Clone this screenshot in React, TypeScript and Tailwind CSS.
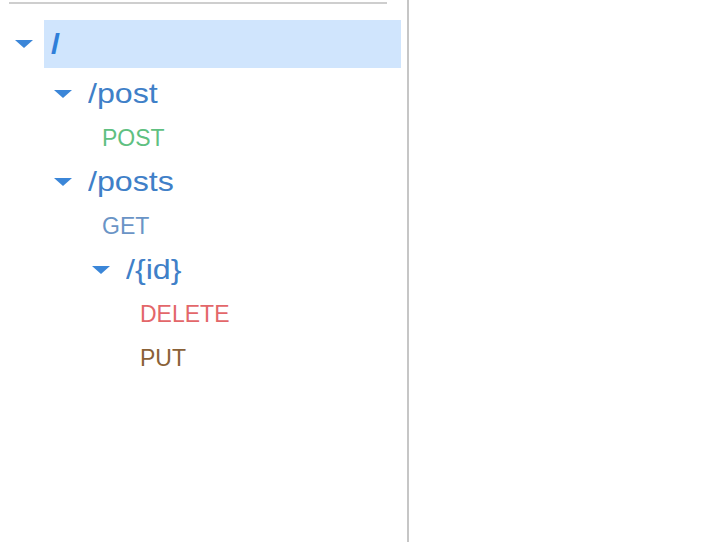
import React from 'react';

type Method = { name: string; color: string };
type PathNode = { label: string; methods: Method[]; children: PathNode[] };

const tree: PathNode = {
  label: '/',
  methods: [],
  children: [
    {
      label: '/post',
      methods: [{ name: 'POST', color: 'text-[#5fc081]' }],
      children: [],
    },
    {
      label: '/posts',
      methods: [{ name: 'GET', color: 'text-[#6a94c6]' }],
      children: [
        {
          label: '/{id}',
          methods: [
            { name: 'DELETE', color: 'text-[#e3676a]' },
            { name: 'PUT', color: 'text-[#8a6137]' },
          ],
          children: [],
        },
      ],
    },
  ],
};

// indentation per depth, written out so tailwind picks them up
const caretPad = ['pl-[15px]', 'pl-[54px]', 'pl-[92px]'];
const methodPad = ['pl-[66px]', 'pl-[102px]', 'pl-[140px]'];

function Caret() {
  return (
    <svg width="18" height="8" viewBox="0 0 18 8" className="shrink-0">
      <polygon points="0,0 18,0 9,8" fill="#3b86d8" />
    </svg>
  );
}

function Label({ text, className }: { text: string; className: string }) {
  return <span className={`inline-block origin-left ${className}`}>{text}</span>;
}

function Node({ node, depth }: { node: PathNode; depth: number }) {
  return (
    <>
      <div className={`flex h-11 items-center ${caretPad[depth]}`}>
        <Caret />
        <div className="ml-[16px]">
          <Label text={node.label} className="scale-x-[1.15] text-[28px] text-[#3f80c8]" />
        </div>
      </div>
      {node.methods.map((m) => (
        <div key={m.name} className={`flex h-11 items-center ${methodPad[depth]}`}>
          <Label text={m.name} className={`text-[23px] ${m.color}`} />
        </div>
      ))}
      {node.children.map((child) => (
        <Node key={child.label} node={child} depth={depth + 1} />
      ))}
    </>
  );
}

export default function App() {
  return (
    <div className="flex h-[542px] w-[718px] bg-white font-['Liberation_Sans',Arial,sans-serif]">
      <div className="w-[409px] shrink-0 border-r-2 border-[#c6c6c6]">
        <div className="ml-[9px] mt-[2px] h-[2px] w-[378px] bg-[#cecece]" />

        <div className="mt-[16px] flex h-12 items-center pl-[15px]">
          <Caret />
          <div className="ml-[11px] mr-[6px] flex h-full flex-1 items-center bg-[#d0e5fd] pl-[7px]">
            <Label text={tree.label} className="scale-x-[1.15] text-[28px] font-bold text-[#2f7fd9]" />
          </div>
        </div>

        <div className="mt-[4px]">
          {tree.children.map((child) => (
            <Node key={child.label} node={child} depth={1} />
          ))}
        </div>
      </div>
      <div className="flex-1" />
    </div>
  );
}
